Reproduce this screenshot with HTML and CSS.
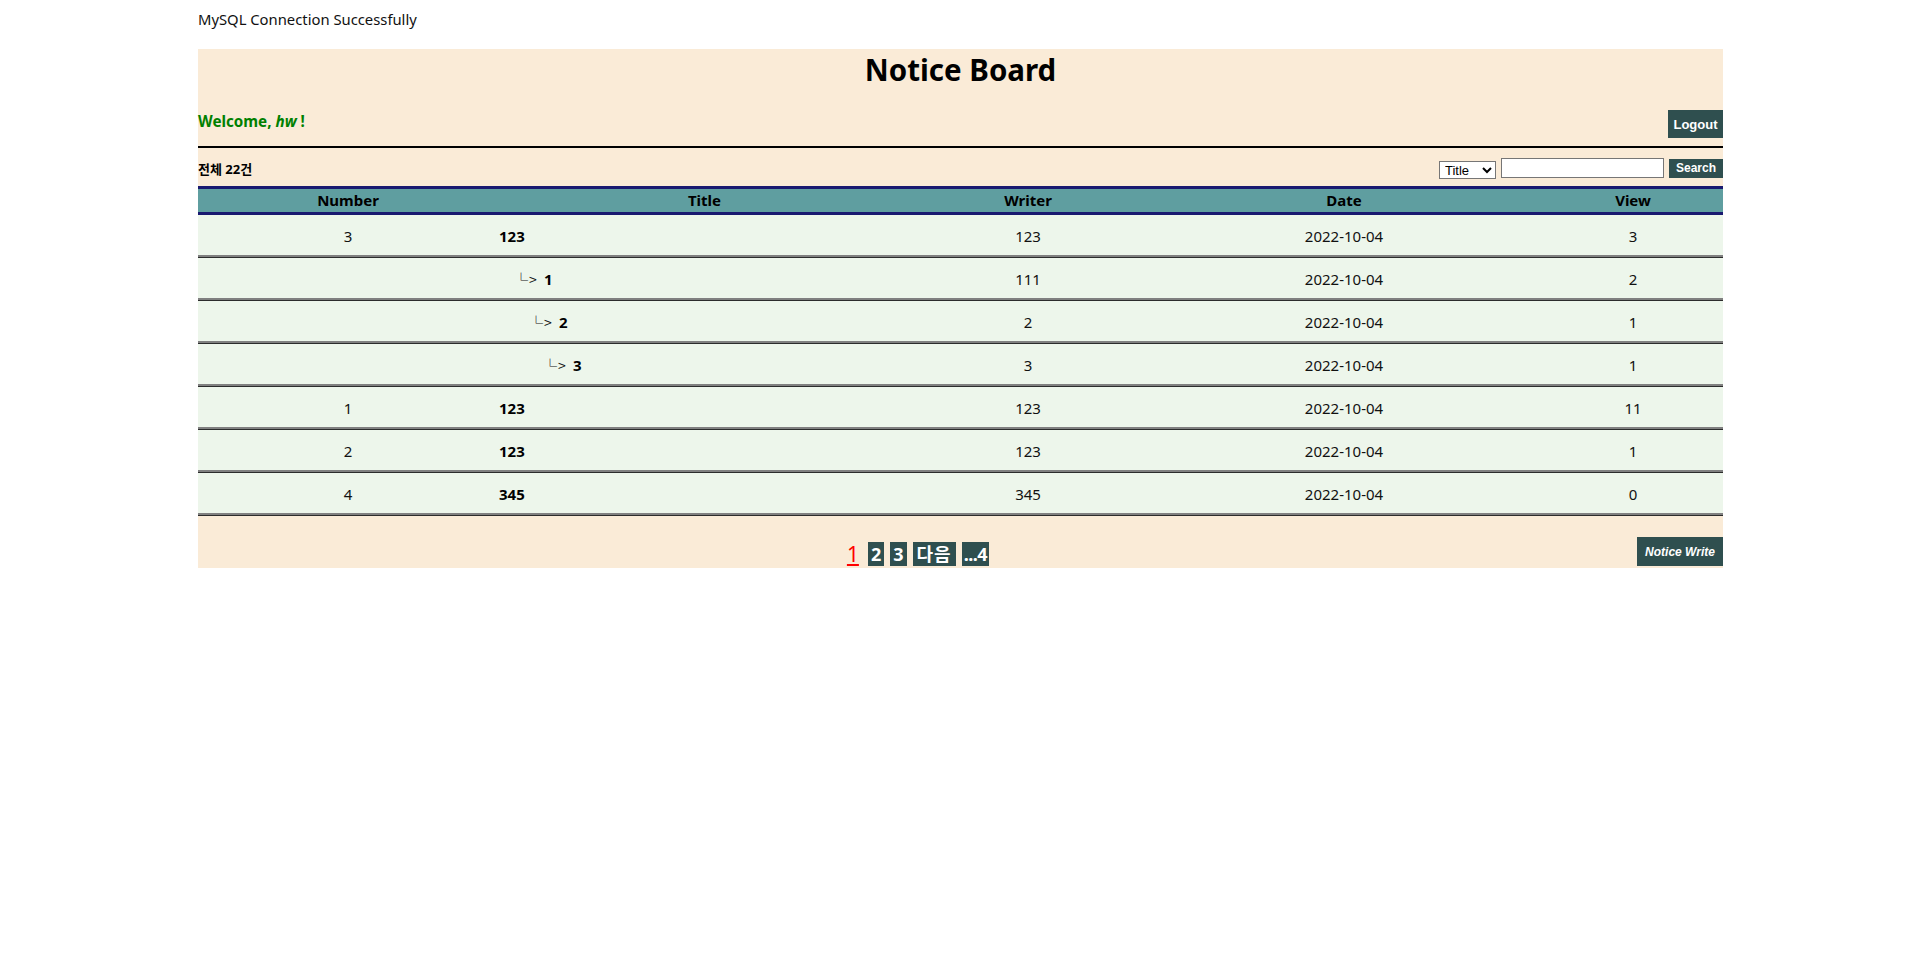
FILE: index.html
```html
<!DOCTYPE html>
<html lang="ko">
<head>
<meta charset="utf-8">
<title>Notice Board</title>
<link rel="stylesheet" href="styles.css">
</head>
<body>
<div class="page">
  <div class="status">MySQL Connection Successfully</div>

  <header class="board-head">
    <h1 class="board-title">Notice Board</h1>
    <div class="user-row">
      <span class="welcome">Welcome, <i>hw</i> !</span>
      <button class="btn btn-logout" type="button">Logout</button>
    </div>
  </header>

  <div class="search-row">
    <span class="total">전체 22건</span>
    <form class="search-form">
      <select class="search-select">
        <option>Title</option>
        <option>Writer</option>
      </select>
      <input class="search-input" type="text">
      <button class="btn btn-search" type="button">Search</button>
    </form>
  </div>

  <table class="board">
    <colgroup>
      <col class="c-num"><col class="c-title"><col class="c-writer"><col class="c-date"><col class="c-view">
    </colgroup>
    <thead>
      <tr><th>Number</th><th>Title</th><th>Writer</th><th>Date</th><th>View</th></tr>
    </thead>
    <tbody>
      <tr><td>3</td><td class="t"><b>123</b></td><td>123</td><td>2022-10-04</td><td>3</td></tr>
      <tr><td></td><td class="t"><span class="reply d1"><span class="arrow">└&gt;</span><b>1</b></span></td><td>111</td><td>2022-10-04</td><td>2</td></tr>
      <tr><td></td><td class="t"><span class="reply d2"><span class="arrow">└&gt;</span><b>2</b></span></td><td>2</td><td>2022-10-04</td><td>1</td></tr>
      <tr><td></td><td class="t"><span class="reply d3"><span class="arrow">└&gt;</span><b>3</b></span></td><td>3</td><td>2022-10-04</td><td>1</td></tr>
      <tr><td>1</td><td class="t"><b>123</b></td><td>123</td><td>2022-10-04</td><td>11</td></tr>
      <tr><td>2</td><td class="t"><b>123</b></td><td>123</td><td>2022-10-04</td><td>1</td></tr>
      <tr><td>4</td><td class="t"><b>345</b></td><td>345</td><td>2022-10-04</td><td>0</td></tr>
    </tbody>
  </table>

  <div class="foot-bar">
    <nav class="pager">
      <a class="pg-current">1</a>
      <a class="pg">2</a>
      <a class="pg">3</a>
      <a class="pg pg-next">다음</a>
      <a class="pg pg-last">...4</a>
    </nav>
    <button class="btn btn-write" type="button">Notice Write</button>
  </div>
</div>
</body>
</html>
```

FILE: styles.css
```css
html, body {
  margin: 0;
  padding: 0;
  background: #ffffff;
}

body {
  font-family: "Noto Sans", "Noto Sans CJK KR", sans-serif;
  color: #000;
}

.page {
  width: 1525px;
  margin-left: 198px;
}

.status {
  height: 49px;
  line-height: 39px;
  font-size: 14.8px;
  color: #111;
}

.board-head {
  background: #faebd7;
  border-bottom: 2px solid #000;
}

.board-title {
  margin: 0;
  text-align: center;
  font-size: 29.5px;
  line-height: 41px;
  font-weight: 700;
}

.user-row {
  display: flex;
  justify-content: space-between;
  align-items: flex-start;
  margin-top: 20px;
  padding-bottom: 8px;
}

.welcome {
  color: #008000;
  font-weight: 700;
  font-size: 15.2px;
  line-height: 22px;
}

.btn {
  border: none;
  margin: 0;
  background: #2f4f4f;
  color: #fff;
  font-family: "Liberation Sans", Arial, sans-serif;
  font-weight: 700;
  cursor: pointer;
  padding: 0;
}

.btn-logout {
  width: 55px;
  height: 28px;
  font-size: 13px;
}

.search-row {
  display: flex;
  justify-content: space-between;
  align-items: center;
  box-sizing: border-box;
  height: 38px;
  padding-top: 2px;
  background: #faebd7;
}

.total {
  font-size: 13px;
  font-weight: 700;
}

.search-form {
  display: flex;
  align-items: center;
  margin: 0;
}

.search-select {
  box-sizing: border-box;
  width: 57px;
  height: 18px;
  margin-top: 4px;
  font-family: "Liberation Sans", Arial, sans-serif;
  font-size: 13px;
  border: 1px solid #767676;
  border-radius: 0;
  background: #fff;
  padding: 0 0 0 1px;
}

.search-input {
  box-sizing: border-box;
  width: 163px;
  height: 20px;
  margin: 0 0 0 5px;
  border: 1px solid #767676;
  padding: 0 2px;
  background: #fff;
}

.btn-search {
  width: 54px;
  height: 19px;
  margin-left: 5px;
  font-size: 12px;
}

.board {
  width: 100%;
  table-layout: fixed;
  border-collapse: separate;
  border-spacing: 0;
}

.c-num { width: 300px; }
.c-title { width: 413px; }
.c-writer { width: 234px; }
.c-date { width: 398px; }
.c-view { width: 180px; }

.board th {
  background: #5f9ea0;
  border-top: 3px solid #191970;
  border-bottom: 3px solid #191970;
  padding: 0;
  font-size: 15px;
  font-weight: 700;
  line-height: 23px;
  color: #000;
}

.board td {
  background: #edf6eb;
  padding: 0;
  line-height: 42px;
  font-size: 15px;
  text-align: center;
  border-bottom: 1px solid #2c2c2c;
  box-shadow: inset 0 -2px 0 #808080;
  color: #111;
}

.board td.t {
  text-align: left;
  padding-left: 1px;
}

.board td b {
  color: #000;
}

.reply {
  display: inline-block;
}

.reply.d1 { padding-left: 15px; }
.reply.d2 { padding-left: 30px; }
.reply.d3 { padding-left: 44px; }

.arrow {
  display: inline-block;
  width: 30px;
  font-family: "Noto Sans CJK KR", sans-serif;
  font-size: 14px;
  letter-spacing: 1px;
}

.foot-bar {
  display: flex;
  align-items: flex-end;
  background: #faebd7;
  padding-top: 21px;
  padding-bottom: 2px;
}

.pager {
  flex: 1;
  display: flex;
  justify-content: center;
  align-items: flex-end;
  gap: 6px;
}

.pg-current {
  color: #ff0000;
  text-decoration: underline;
  font-size: 21px;
  line-height: 24px;
  margin-right: 2px;
  padding: 0 1px;
}

.pg {
  background: #2f4f4f;
  color: #fff;
  font-weight: 700;
  font-size: 18px;
  line-height: 24px;
  padding: 0 3px;
}

.pg-next {
  padding: 0 4px;
  letter-spacing: 1px;
}

.pg-last {
  padding: 0 2px;
  letter-spacing: -0.5px;
}

.btn-write {
  width: 86px;
  height: 29px;
  font-size: 12px;
  font-style: italic;
}
```
